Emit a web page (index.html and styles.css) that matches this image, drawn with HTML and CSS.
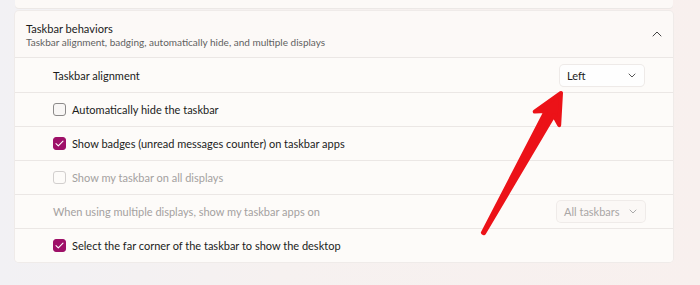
FILE: index.html
```html
<!DOCTYPE html>
<html>
<head>
<meta charset="utf-8">
<link rel="stylesheet" href="styles.css">
</head>
<body>
<div class="page">
  <div class="card-top"></div>
  <div class="card">
    <div class="header">
      <div class="titles">
        <div class="title">Taskbar behaviors</div>
        <div class="subtitle">Taskbar alignment, badging, automatically hide, and multiple displays</div>
      </div>
      <svg class="chev-up" width="10" height="6" viewBox="0 0 10 6"><path d="M1 5 L5 1 L9 5" fill="none" stroke="#444" stroke-width="1" stroke-linecap="round" stroke-linejoin="round"/></svg>
    </div>
    <div class="row first">
      <span class="label">Taskbar alignment</span>
      <div class="select">
        <span>Left</span>
        <svg width="8" height="5" viewBox="0 0 8 5"><path d="M1 1 L4 4 L7 1" fill="none" stroke="#555" stroke-width="1" stroke-linecap="round" stroke-linejoin="round"/></svg>
      </div>
    </div>
    <div class="row">
      <span class="check"></span>
      <span class="label">Automatically hide the taskbar</span>
    </div>
    <div class="row">
      <span class="check on"><svg width="9" height="7" viewBox="0 0 9 7"><path d="M1 3.6 L3.3 5.8 L8 1.2" fill="none" stroke="#fff" stroke-width="1.1" stroke-linecap="round" stroke-linejoin="round"/></svg></span>
      <span class="label">Show badges (unread messages counter) on taskbar apps</span>
    </div>
    <div class="row">
      <span class="check off"></span>
      <span class="label dim">Show my taskbar on all displays</span>
    </div>
    <div class="row">
      <span class="label dim">When using multiple displays, show my taskbar apps on</span>
      <div class="select disabled">
        <span>All taskbars</span>
        <svg width="8" height="5" viewBox="0 0 8 5"><path d="M1 1 L4 4 L7 1" fill="none" stroke="#aaa" stroke-width="1" stroke-linecap="round" stroke-linejoin="round"/></svg>
      </div>
    </div>
    <div class="row">
      <span class="check on"><svg width="9" height="7" viewBox="0 0 9 7"><path d="M1 3.6 L3.3 5.8 L8 1.2" fill="none" stroke="#fff" stroke-width="1.1" stroke-linecap="round" stroke-linejoin="round"/></svg></span>
      <span class="label">Select the far corner of the taskbar to show the desktop</span>
    </div>
  </div>
</div>
<svg class="arrow" width="700" height="285" viewBox="0 0 700 285">
  <g transform="translate(561,93) rotate(29)">
    <path d="M0 0 L14 29 L4.5 23 L0.6 160 L-0.6 160 L-4.5 23 L-14 29 Z" fill="#ec1218" stroke="#ec1218" stroke-width="4" stroke-linejoin="round"/>
  </g>
</svg>
</body>
</html>
```

FILE: styles.css
```css
html, body {
  margin: 0;
  padding: 0;
}
body {
  width: 700px;
  height: 285px;
  overflow: hidden;
  position: relative;
  background: linear-gradient(90deg, #f2f1f4 0%, #f6f1f0 40%, #f8f0ee 100%);
  font-family: "Lato", "Open Sans", sans-serif;
  color: #1b1b1b;
}
.page {
  padding-left: 15px;
  width: 658px;
}
.card-top {
  height: 8px;
  background: #fcf9f7;
  border-radius: 0 0 4px 4px;
  box-shadow: 0 1px 0 #ece8e6;
}
.card {
  margin-top: 3px;
  background: #fcf9f7;
  border-radius: 4px;
  box-shadow: 0 0 0 1px #efebe9;
  overflow: hidden;
}
.header {
  height: 46px;
  display: flex;
  align-items: center;
  justify-content: space-between;
  padding: 0 11px;
}
.titles {
  display: flex;
  flex-direction: column;
  gap: 0;
  margin-top: 2px;
}
.title {
  font-size: 11.1px;
  line-height: 14px;
  color: #1b1b1b;
}
.subtitle {
  font-size: 10px;
  line-height: 12px;
  color: #616161;
}
.row {
  height: 33px;
  border-top: 1px solid #ebe7e5;
  display: flex;
  align-items: center;
  padding: 0 29px 0 38px;
  background: #fdfbf9;
}
.row.first {
  height: 34px;
}
.label {
  font-size: 11px;
  color: #1b1b1b;
  flex: 1;
}
.label.dim {
  color: #a4a1a0;
}
.check {
  width: 11px;
  height: 11px;
  border: 1px solid #8c8a8a;
  border-radius: 3px;
  background: #f8f6f5;
  margin-right: 6px;
  display: flex;
  align-items: center;
  justify-content: center;
  flex: none;
}
.check.on {
  background: #9e1068;
  border-color: #9e1068;
}
.check.off {
  border-color: #d2cfce;
  background: transparent;
}
.select {
  width: 84px;
  height: 21px;
  box-sizing: border-box;
  padding: 0 8px 0 7px;
  display: flex;
  align-items: center;
  justify-content: space-between;
  background: #fefefe;
  border-radius: 4px;
  box-shadow: 0 0 0 1px #eeeae8, 0 1px 1px rgba(0,0,0,0.06);
  font-size: 11px;
  color: #1b1b1b;
}
.select.disabled {
  width: 88px;
  background: #fbf8f6;
  box-shadow: 0 0 0 1px #efebe9;
  color: #a9a6a5;
  margin-right: -1px;
}
.arrow {
  position: absolute;
  left: 0;
  top: 0;
  pointer-events: none;
}
```
